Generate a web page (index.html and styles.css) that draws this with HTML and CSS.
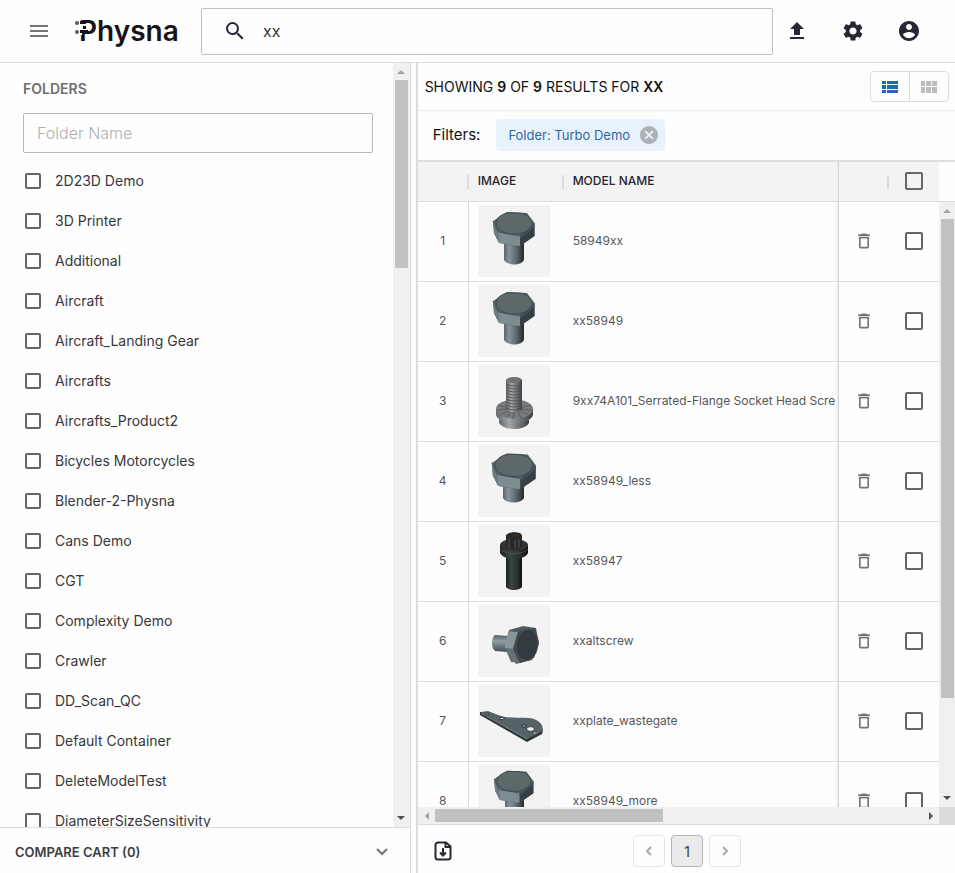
FILE: index.html
```html
<!DOCTYPE html>
<html lang="en">
<head>
<meta charset="utf-8">
<meta name="viewport" content="width=device-width, initial-scale=1">
<title>Physna</title>
<link rel="stylesheet" href="styles.css">
</head>
<body>
<svg class="defs" width="0" height="0" aria-hidden="true">
  <defs>
    <linearGradient id="shank"><stop offset="0" stop-color="#59666a"/><stop offset=".25" stop-color="#879397"/><stop offset=".6" stop-color="#5f6b6f"/><stop offset="1" stop-color="#202a2d"/></linearGradient>
    <linearGradient id="steel"><stop offset="0" stop-color="#626668"/><stop offset=".35" stop-color="#a3a6a8"/><stop offset="1" stop-color="#3d4042"/></linearGradient>
    <linearGradient id="dark"><stop offset="0" stop-color="#1e2122"/><stop offset=".35" stop-color="#3c4446"/><stop offset=".7" stop-color="#2b2f30"/><stop offset="1" stop-color="#15120f"/></linearGradient>
    <linearGradient id="side" x2="0" y2="1"><stop offset="0" stop-color="#4f5b5f"/><stop offset=".35" stop-color="#939fa2"/><stop offset="1" stop-color="#414c50"/></linearGradient>
    <symbol id="trash" viewBox="0 0 24 24"><path d="M6 19c0 1.100.9 2 2 2h8c1.100 0 2-.9 2-2V7H6v12zM8 9h8v10H8V9zm7.500-5l-1-1h-5l-1 1H5v2h14V4z"/></symbol>
    <symbol id="hexhead" viewBox="0 0 72 72">
      <path d="M15 16 29 7 49 8 56.500 18V31L42 41 21 38 16 28Z" fill="#59666a"/>
      <path d="M15 16 20 27 21 38 16 28Z" fill="#6c7a7e"/>
      <path d="M20 27 42 31V41L21 38Z" fill="#7e8b8f"/>
      <path d="M42 31 56.500 18V31L42 41Z" fill="#363f42"/>
      <path d="M42 31 56.500 18V22L42 34Z" fill="#455155"/>
      <path d="M15 16 20 27 42 31" fill="none" stroke="#48555a" stroke-width=".8"/>
      <path d="M18 17C20 10 28 7 36 8 46 7 54 12 54 19 52 26 44 29 36 29 26 29 18 25 18 17Z" fill="#5d686b" stroke="#333c3e" stroke-width=".7"/>
    </symbol>
  </defs>
</svg>

<header class="topbar">
  <button class="icon-btn menu" aria-label="Menu"><svg width="18" height="12" viewBox="0 0 18 12"><path d="M0 0h18v2H0zM0 5h18v2H0zM0 10h18v2H0z"/></svg></button>
  <a class="logo" href="#" aria-label="Physna">
    <svg width="104" height="34" viewBox="0 0 104 34"><text x="4" y="27" class="logo-text">Physna</text><path d="M4 10h6v6H4zM4 19h3v2H4z" fill="#fefefe"/><path d="M5 7h6v3H5zM8 12h3v3H8zM5 16h8v3H5z" fill="#17121a"/><circle cx="2" cy="9" r="2"/><circle cx="2" cy="18" r="2"/></svg>
  </a>
  <label class="search">
    <svg width="24" height="24" viewBox="0 0 24 24"><path d="M15.500 14h-.79l-.28-.27A6.471 6.471 0 0 0 16 9.500 6.500 6.500 0 1 0 9.500 16c1.610 0 3.090-.59 4.230-1.570l.27.28v.79l5 4.990L20.490 19l-4.990-5zm-6 0C7.010 14 5 11.990 5 9.500S7.010 5 9.500 5 14 7.010 14 9.500 11.990 14 9.500 14z"/></svg>
    <input type="text" value="xx" aria-label="Search">
  </label>
  <nav class="actions">
    <button class="icon-btn" aria-label="Upload"><svg width="24" height="24" viewBox="0 0 24 24"><path d="M5 20h14v-2H5v2zm0-10h4v6h6v-6h4l-7-7-7 7z"/></svg></button>
    <button class="icon-btn" aria-label="Settings"><svg width="24" height="24" viewBox="0 0 24 24"><path d="M19.140 12.940c.04-.3.060-.61.060-.94 0-.32-.02-.64-.07-.94l2.030-1.580a.49.49 0 0 0 .12-.61l-1.920-3.320a.488.488 0 0 0-.59-.22l-2.390.96c-.5-.38-1.030-.7-1.620-.94l-.36-2.540a.484.484 0 0 0-.48-.41h-3.840c-.24 0-.43.17-.47.41l-.36 2.540c-.59.24-1.130.57-1.620.94l-2.390-.96c-.22-.08-.47 0-.59.22L2.740 8.870c-.12.21-.08.47.12.61l2.030 1.580c-.05.3-.09.63-.09.94s.02.64.07.94l-2.030 1.580a.49.49 0 0 0-.12.61l1.920 3.320c.12.22.37.29.59.22l2.390-.96c.5.38 1.030.7 1.620.94l.36 2.540c.05.24.24.41.48.41h3.840c.24 0 .44-.17.47-.41l.36-2.540c.59-.24 1.130-.56 1.620-.94l2.390.96c.22.08.47 0 .59-.22l1.920-3.320c.12-.22.07-.47-.12-.61l-2.010-1.580zM12 15.600c-1.980 0-3.600-1.620-3.600-3.600s1.620-3.600 3.600-3.600 3.600 1.620 3.600 3.600-1.620 3.600-3.600 3.600z"/></svg></button>
    <button class="icon-btn" aria-label="Account"><svg width="24" height="24" viewBox="0 0 24 24"><path d="M12 2C6.480 2 2 6.480 2 12s4.480 10 10 10 10-4.480 10-10S17.520 2 12 2zm0 3c1.660 0 3 1.340 3 3s-1.340 3-3 3-3-1.340-3-3 1.340-3 3-3zm0 14.200c-2.500 0-4.710-1.280-6-3.220.03-1.990 4-3.080 6-3.080 1.990 0 5.970 1.090 6 3.080-1.290 1.940-3.500 3.220-6 3.220z"/></svg></button>
  </nav>
</header>

<div class="workspace">
  <aside class="sidebar">
    <div class="folders">
      <div class="folders-body">
        <h2>FOLDERS</h2>
        <input class="folder-search" type="text" placeholder="Folder Name" aria-label="Folder Name">
        <ul>
          <li><label><input type="checkbox">2D23D Demo</label></li>
          <li><label><input type="checkbox">3D Printer</label></li>
          <li><label><input type="checkbox">Additional</label></li>
          <li><label><input type="checkbox">Aircraft</label></li>
          <li><label><input type="checkbox">Aircraft_Landing Gear</label></li>
          <li><label><input type="checkbox">Aircrafts</label></li>
          <li><label><input type="checkbox">Aircrafts_Product2</label></li>
          <li><label><input type="checkbox">Bicycles Motorcycles</label></li>
          <li><label><input type="checkbox">Blender-2-Physna</label></li>
          <li><label><input type="checkbox">Cans Demo</label></li>
          <li><label><input type="checkbox">CGT</label></li>
          <li><label><input type="checkbox">Complexity Demo</label></li>
          <li><label><input type="checkbox">Crawler</label></li>
          <li><label><input type="checkbox">DD_Scan_QC</label></li>
          <li><label><input type="checkbox">Default Container</label></li>
          <li><label><input type="checkbox">DeleteModelTest</label></li>
          <li><label><input type="checkbox">DiameterSizeSensitivity</label></li>
        </ul>
      </div>
      <div class="vbar" aria-hidden="true"><i class="arrow up"></i><i class="thumb folder-thumb"></i><i class="arrow down"></i></div>
    </div>
    <button class="cart"><span>COMPARE CART (0)</span><svg width="12" height="8" viewBox="0 0 12 8"><path d="M1 1l5 5 5-5"/></svg></button>
  </aside>

  <main class="results">
    <div class="summary">
      <p>SHOWING <b>9</b> OF <b>9</b> RESULTS FOR <b>XX</b></p>
      <div class="views">
        <button aria-label="List view" class="on"><svg width="16" height="12" viewBox="0 0 16 12"><path d="M0 0h4v3H0zM5 0h11v3H5zM0 4h4v4H0zM5 4h11v4H5zM0 9h4v3H0zM5 9h11v3H5z"/></svg></button>
        <button aria-label="Grid view"><svg width="16" height="12" viewBox="0 0 16 12"><path d="M0 0h4v5H0zM5 0h5v5H5zM11 0h5v5h-5zM0 6h4v6H0zM5 6h5v6H5zM11 6h5v6h-5z"/></svg></button>
      </div>
    </div>
    <div class="filters">
      <span>Filters:</span>
      <span class="chip"><span>Folder: Turbo Demo</span>
        <button aria-label="Remove filter"><svg width="18" height="18" viewBox="2 2 20 20"><path d="M12 2C6.470 2 2 6.470 2 12s4.470 10 10 10 10-4.470 10-10S17.530 2 12 2zm5 13.590L15.590 17 12 13.410 8.410 17 7 15.590 10.590 12 7 8.410 8.410 7 12 10.590 15.590 7 17 8.410 13.410 12 17 15.590z"/></svg></button>
      </span>
    </div>

    <div class="grid">
      <div class="table-view">
        <table>
          <colgroup><col class="c-num"><col class="c-img"><col><col class="c-del"><col class="c-act"></colgroup>
          <thead><tr><th class="sep"></th><th class="sep">IMAGE</th><th>MODEL NAME</th><th class="pin sep"></th><th><input type="checkbox" aria-label="Select all"></th></tr></thead>
          <tbody>
            <tr><td>1</td><td><svg class="thumbnail" viewBox="0 0 72 72"><path d="M26 34h20v21c-3 6-16 6-20 0z" fill="url(#shank)"/><use href="#hexhead"/></svg></td><td>58949xx</td><td class="pin"><button aria-label="Delete"><svg><use href="#trash"/></svg></button></td><td><input type="checkbox" aria-label="Select 58949xx"></td></tr>
            <tr><td>2</td><td><svg class="thumbnail" viewBox="0 0 72 72"><path d="M26 34h20v21c-3 6-16 6-20 0z" fill="url(#shank)"/><use href="#hexhead"/></svg></td><td>xx58949</td><td class="pin"><button aria-label="Delete"><svg><use href="#trash"/></svg></button></td><td><input type="checkbox" aria-label="Select xx58949"></td></tr>
            <tr><td>3</td><td><svg class="thumbnail" viewBox="0 0 72 72">
              <path d="M21 49v9c5 8 25 8 30 0v-9z" fill="url(#steel)"/><path d="M18 44v6c3 11 34 11 37 0v-6z" fill="url(#steel)"/><ellipse cx="36.500" cy="44" rx="18.500" ry="9.500" fill="#777b7d"/>
              <path d="M20 40l11 3M19 45l12-1M22 50l10-5M28 53l5-7M35 54l1-7M43 53l-3-7M50 50l-8-5M54 45l-11-1M53 40l-10 3" stroke="#4c5052" stroke-width=".7"/>
              <path d="M28 15c2-4 14-4 16 0v29c-3 4-13 4-16 0z" fill="url(#steel)"/><ellipse cx="36" cy="15" rx="7" ry="3" fill="#707476"/>
              <path d="M28 19q8 4 16 0M28 22q8 4 16 0M28 25q8 4 16 0M28 28q8 4 16 0M28 31q8 4 16 0M28 34q8 4 16 0M28 37q8 4 16 0M28 40q8 4 16 0M28 43q8 4 16 0" fill="none" stroke="#45494b" stroke-width=".8"/>
            </svg></td><td>9xx74A101_Serrated-Flange Socket Head Scre</td><td class="pin"><button aria-label="Delete"><svg><use href="#trash"/></svg></button></td><td><input type="checkbox" aria-label="Select 9xx74A101"></td></tr>
            <tr><td>4</td><td><svg class="thumbnail" viewBox="0 0 72 72"><path d="M25 38h21v15c-3 6-18 6-21 0z" fill="url(#shank)"/><svg x="-2" y="1" width="76" height="76" viewBox="0 0 72 72"><use href="#hexhead" width="72" height="72"/></svg></svg></td><td>xx58949_less</td><td class="pin"><button aria-label="Delete"><svg><use href="#trash"/></svg></button></td><td><input type="checkbox" aria-label="Select xx58949_less"></td></tr>
            <tr><td>5</td><td><svg class="thumbnail" viewBox="0 0 72 72">
              <path d="M28 30h16v32c-3 4-13 4-16 0z" fill="url(#dark)"/><path d="M22 20v8c4 8 24 8 28 0v-8z" fill="url(#dark)"/><ellipse cx="36" cy="20" rx="14" ry="6" fill="#343332"/><path d="M22 24c5 6 23 6 28 0" fill="none" stroke="#555756" stroke-width=".7"/>
              <path d="M28 11v11l3 2 2-1 3 2 3-2 2 1 3-2V11z" fill="#252829"/><path d="M31 13v10M37 14v10M41 13v10" stroke="#586062" stroke-width=".9"/><path d="M28 10l3-2 5-1 6 1 2 2v2l-3 2-4 1-6-1-3-2z" fill="#2e2823"/>
            </svg></td><td>xx58947</td><td class="pin"><button aria-label="Delete"><svg><use href="#trash"/></svg></button></td><td><input type="checkbox" aria-label="Select xx58947"></td></tr>
            <tr><td>6</td><td><svg class="thumbnail" viewBox="0 0 72 72">
              <path d="M17 30l13 1v16l-13-1c-4-3-4-13 0-16z" fill="url(#side)"/><path d="M27 39l4-14 14-4 13 2 3 15-7 17-16 4-5-7z" fill="#59666a"/><path d="M31 26l9 1-5 17-8-1v-5z" fill="#89969a"/><path d="M27 43l8 1 8 14-10-1z" fill="#637175"/><path d="M31 26l14-4 13 2-18 3z" fill="#4d595d"/><path d="M40 27l17-4 4 15-5 15-14 5-7-14z" fill="#39464a"/><ellipse cx="49" cy="40" rx="11" ry="16" transform="rotate(8 49 40)" fill="#343b3f" stroke="#566165" stroke-width=".6"/>
            </svg></td><td>xxaltscrew</td><td class="pin"><button aria-label="Delete"><svg><use href="#trash"/></svg></button></td><td><input type="checkbox" aria-label="Select xxaltscrew"></td></tr>
            <tr><td>7</td><td><svg class="thumbnail" viewBox="0 0 72 72">
              <path d="M2 27l8 0 10 4c14 5 26 0 36 5 8 3 10 8 8 13L49 57 2 30z" fill="#2c3436"/><path d="M3 27l7-1 10 4c14 5 26 1 36 4 9 4 10 9 7 13L49 54z" fill="#566366"/><path d="M3 28l46 26" stroke="#7e8a8d" stroke-width="1"/><ellipse cx="52.500" cy="44" rx="4" ry="2.400" fill="#f3f3f3" stroke="#273033"/><ellipse cx="24" cy="33.500" rx="2" ry="1.200" fill="#e8e8e8" stroke="#273033"/><ellipse cx="46" cy="41" rx="2" ry="1.200" fill="#a5adaf" stroke="#273033"/><ellipse cx="57" cy="48" rx="1.500" ry="1" fill="#8e999c"/><ellipse cx="9" cy="29" rx="1.800" ry="1" fill="#c8cccd" stroke="#273033"/>
            </svg></td><td>xxplate_wastegate</td><td class="pin"><button aria-label="Delete"><svg><use href="#trash"/></svg></button></td><td><input type="checkbox" aria-label="Select xxplate_wastegate"></td></tr>
            <tr><td>8</td><td><svg class="thumbnail" viewBox="0 0 72 72"><path d="M27 34h19v24c-3 6-16 6-19 0z" fill="url(#shank)"/><svg x="2" y="-1" width="68" height="68" viewBox="0 0 72 72"><use href="#hexhead" width="72" height="72"/></svg></svg></td><td>xx58949_more</td><td class="pin"><button aria-label="Delete"><svg><use href="#trash"/></svg></button></td><td><input type="checkbox" aria-label="Select xx58949_more"></td></tr>
          </tbody>
        </table>
      </div>
      <div class="rail" aria-hidden="true"><div class="rail-head"></div><div class="vbar"><i class="arrow up"></i><i class="thumb table-thumb"></i><i class="arrow down"></i></div></div>
      <div class="hbar" aria-hidden="true"><i class="arrow left"></i><i class="thumb"></i><i class="arrow right"></i></div>
      <div class="corner"></div>
    </div>

    <footer class="pager">
      <button class="icon-btn" aria-label="Download report"><svg class="download" width="18" height="20" viewBox="0 0 18 20"><path d="M4 1.500h8l4.500 4V16a2.500 2.500 0 0 1-2.500 2.500H4A2.500 2.500 0 0 1 1.500 16V4A2.500 2.500 0 0 1 4 1.500zM11.500 2v4H16M9 7v7M6 11.500l3 3 3-3"/></svg></button>
      <div class="pages">
        <button aria-label="Previous page"><svg width="6" height="10" viewBox="0 0 6 10"><path d="M5 1L1 5l4 4"/></svg></button>
        <button class="current">1</button>
        <button aria-label="Next page"><svg width="6" height="10" viewBox="0 0 6 10"><path d="M1 1l4 4-4 4"/></svg></button>
      </div>
    </footer>
  </main>
</div>
</body>
</html>
```
FILE: styles.css
```css
* { box-sizing: border-box; }
body {
  margin: 0;
  height: 100vh;
  display: flex;
  flex-direction: column;
  overflow: hidden;
  background: #fefefe;
  color: #1b1b1f;
  font-family: Inter, "Liberation Sans", sans-serif;
  font-size: 13px;
}
button, input { font: inherit; color: inherit; }
button { padding: 0; border: 0; background: none; display: flex; align-items: center; justify-content: center; }
h2, p, ul { margin: 0; padding: 0; font-weight: 400; }
li { list-style: none; }
.defs { position: absolute; }

input[type="checkbox"] {
  appearance: none;
  flex: none;
  display: block;
  width: 18px;
  height: 18px;
  margin: 0 auto;
  border: 2px solid #666;
  border-radius: 2px;
}

/* Top bar */
.topbar { flex: none; height: 63px; display: flex; align-items: center; border-bottom: 1px solid #dcdcdc; }
.icon-btn { width: 24px; height: 24px; fill: #272733; }
.menu { margin: 0 33px 0 27px; fill: #757575; }
.logo { width: 126px; margin-left: -9px; height: 34px; fill: #5c5960; }
.logo-text { font: 600 28px Inter, "Liberation Sans", sans-serif; fill: #17121a; }
.search { flex: 1; height: 47px; display: flex; align-items: center; border: 1px solid #bfbfbf; border-radius: 2px; padding-left: 21px; fill: #272733; }
.search input { flex: 1; min-width: 0; border: 0; outline: 0; background: none; padding: 0 0 0 16px; font-size: 16px; color: #333; }
.actions { display: flex; gap: 32px; padding: 0 34px 0 12px; }

.workspace { flex: 1; min-height: 0; display: flex; gap: 5px; }

/* Folder sidebar */
.sidebar { flex: 0 0 43%; display: flex; flex-direction: column; border-right: 1px solid #dcdcdc; }
.folders { flex: 1; min-height: 0; display: flex; }
.folders-body { flex: 1; overflow: hidden; padding: 18px 20px 0 23px; }
.folders h2 { font-size: 14px; line-height: 16px; font-weight: 600; color: #6e6e6e; }
.folder-search { display: block; width: 100%; height: 40px; margin: 16px 0 8px; border: 1px solid #b9b9b9; border-radius: 2px; padding: 0 13px; font-size: 16px; background: none; }
.folder-search::placeholder { color: #b0b0b0; font-weight: 300; }
.folders label { display: flex; align-items: center; gap: 14px; height: 40px; padding: 0 0 2px 2px; font-size: 14px; color: #37373b; }
.folders input[type="checkbox"] { width: 16px; height: 16px; margin: 2px 0 0; }
.cart { flex: none; height: 46px; justify-content: space-between; padding: 2px 22px 0 15px; border-top: 1px solid #dcdcdc; font-weight: 600; color: #3d3d42; }
.cart svg, .pages svg, .download { fill: none; stroke: #757575; stroke-width: 2; }

/* Scroll bars */
.vbar { display: flex; flex-direction: column; align-items: center; width: 17px; padding: 7px 0; background: #f0f0f0; }
.folders .vbar { flex: none; }
.thumb { display: block; background: #c1c1c1; }
.vbar .thumb { width: 13px; margin: 6px 0 auto; }
.folder-thumb { height: 25%; }
.table-thumb { height: 81%; }
.arrow { width: 0; height: 0; border: 4px solid transparent; }
.up { border-top: 0; border-bottom-color: #a3a3a3; }
.down { border-bottom: 0; border-top-color: #505050; }
.left { border-left: 0; border-right-color: #a3a3a3; }
.right { border-right: 0; border-left-color: #505050; }

/* Results */
.results { flex: 1; min-width: 0; display: flex; flex-direction: column; border-left: 2px solid #dcdcdc; }
.summary { flex: none; height: 48px; display: flex; align-items: center; justify-content: space-between; padding: 0 6px 0 7px; border-bottom: 1px solid #ebebeb; font-size: 14px; color: #111; }
.summary b { font-weight: 600; }
.views { display: flex; border: 1px solid #dcdcdc; border-radius: 4px; }
.views button { width: 38px; height: 29px; fill: #bdbdbd; }
.views button + button { width: 39px; border-left: 1px solid #dcdcdc; }
.views .on { fill: #2367b4; }
.filters { flex: none; height: 51px; display: flex; align-items: center; gap: 16px; padding: 0 0 2px 15px; border-bottom: 2px solid #dedede; font-size: 15px; color: #111; }
.chip { display: flex; align-items: center; gap: 10px; height: 32px; padding: 0 7px 0 12px; border-radius: 4px; background: #e8f2fd; color: #2c68a8; font-size: 13px; }
.chip button { fill: #afb2b5; }

.grid { flex: 1; min-height: 0; display: grid; grid-template-columns: 1fr 16px; grid-template-rows: 1fr 17px; border-bottom: 1px solid #dcdcdc; }
.table-view { min-width: 0; min-height: 0; overflow: hidden; }
table { width: 100%; table-layout: fixed; border-collapse: separate; border-spacing: 0; }
.c-num { width: 51px; }
.c-img { width: 95px; }
.c-del { width: 51px; }
.c-act { width: 50px; }
th { height: 40px; padding: 0 9px 2px; text-align: left; font-size: 12px; font-weight: 500; color: #25252b; background: #f3f3f3; border-bottom: 1px solid #dcdcdc; }
.sep { background: linear-gradient(#dcdcdc, #dcdcdc) right center / 2px 14px no-repeat #f3f3f3; }
td { height: 80px; padding: 0 9px 2px; border-bottom: 1px solid #dcdcdc; font-size: 12px; color: #55555a; white-space: nowrap; overflow: hidden; }
td:first-child { text-align: center; border-right: 1px solid #dcdcdc; padding: 0 0 2px; }
th:nth-child(3), td:nth-child(3) { padding-right: 0; background: linear-gradient(to left, #ececec, transparent) right / 3px 100% no-repeat; }
th:nth-child(3) { background-color: #f3f3f3; }
th:last-child, td:last-child { padding: 0 0 2px; }
.pin { padding: 0 0 2px; border-left: 1px solid #d4d4d4; }
td button { margin: 0 auto; }
td button svg { width: 20px; height: 20px; fill: #757575; }
.thumbnail { display: block; width: 72px; height: 72px; background: #f3f3f3; }
.rail { min-height: 0; display: flex; flex-direction: column; }
.rail-head { flex: none; height: 40px; border-bottom: 1px solid #dcdcdc; }
.rail .vbar { width: 16px; flex: 1; min-height: 0; }
.hbar { display: flex; align-items: center; padding: 0 6px 0 7px; background: #f0f0f0; }
.hbar .thumb { width: 45%; height: 13px; margin: 0 auto 0 6px; }
.corner { background: #dcdcdc; }

.pager { flex: none; height: 48px; display: flex; align-items: center; justify-content: space-between; padding: 4px 214px 0 13px; }
.download { stroke: #272733; }
.pages { display: flex; gap: 6px; }
.pages button { width: 32px; height: 32px; border: 1px solid #e4e4e4; border-radius: 4px; }
.pages svg { stroke: #aaa; }
.pages .current { background: #ebebeb; border-color: #b5b5b5; font-size: 14px; color: #3c3c40; }
```
